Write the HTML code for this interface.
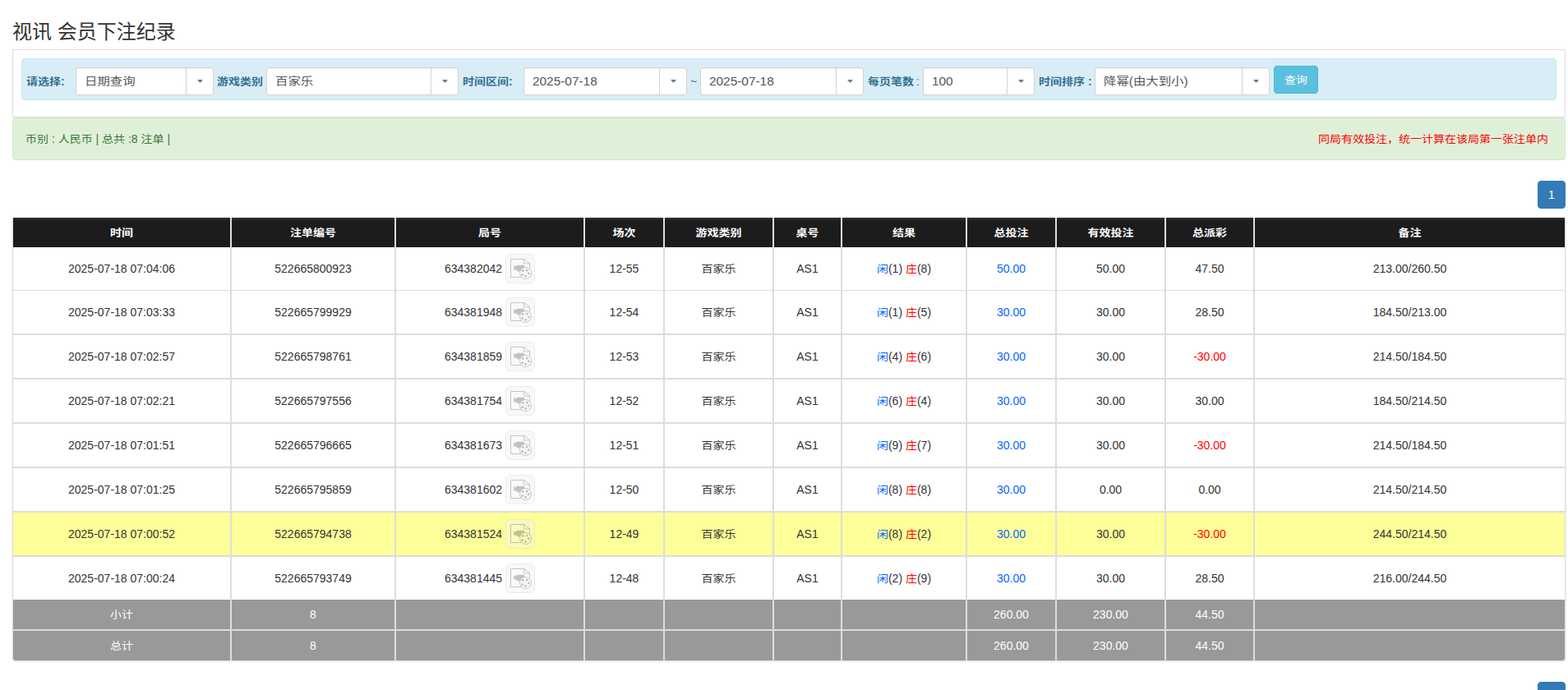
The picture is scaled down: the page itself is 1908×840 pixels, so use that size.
<!DOCTYPE html>
<html lang="zh-CN">
<head>
<meta charset="utf-8">
<title>视讯 会员下注纪录</title>
<style>
*{box-sizing:border-box}
html,body{margin:0;padding:0}
body{width:1908px;height:840px;overflow:hidden;position:relative;background:#fff;color:#333;
 font-family:"Liberation Sans","Noto Sans CJK SC",sans-serif;font-size:14px;line-height:20px}
.title{position:absolute;left:15px;top:25px;margin:0;font-size:24px;line-height:28px;font-weight:400;color:#333;white-space:nowrap}
.panel{position:absolute;left:15px;top:60px;width:1890px;height:83px;border:1px solid #ddd;background:#fff}
.filter{position:absolute;left:26px;top:71px;width:1868px;height:51px;background:#d9edf7;border:1px solid #bce8f1;border-radius:4px}
.lb{position:absolute;top:89px;height:20px;line-height:20px;font-weight:700;color:#31708f;white-space:nowrap;font-size:14px}
.dd{position:absolute;top:82px;height:34px;background:#fff;border:1px solid #d2d2d2;border-radius:3px;box-shadow:inset 0 1px 1px rgba(0,0,0,.05);overflow:hidden}
.dv{position:absolute;left:10px;top:0;line-height:32px;font-size:15.4px;color:#555;white-space:nowrap}
.da{position:absolute;right:0;top:0;width:33px;height:32px;border-left:1px solid #d2d2d2}
.da i{position:absolute;left:13px;top:14px;width:7px;height:4px;background:#7a7a7a;clip-path:polygon(0 0,100% 0,50% 100%)}
.btn{position:absolute;left:1550px;top:80px;width:54px;height:34px;background:#5bc0de;border:1px solid #46b8da;border-radius:4px;color:#fff;text-align:center;line-height:32px;font-size:14px}
.summary{position:absolute;left:15px;top:143px;width:1890px;height:52px;background:#dff0d8;border:1px solid #d6e9c6;border-radius:4px;color:#3c763d}
.summary .l{position:absolute;left:15px;top:15px;white-space:nowrap}
.summary .r{position:absolute;right:20px;top:15px;color:#f00;white-space:nowrap}
.pg{position:absolute;left:1871px;width:34px;height:34px;background:#337ab7;border:1px solid #337ab7;border-radius:4px;color:#fff;text-align:center;line-height:32px;font-size:14px}
table{position:absolute;left:15px;top:265px;width:1890px;border-collapse:separate;border-spacing:0;table-layout:fixed;font-size:14px}
th,td{padding:0;text-align:center;vertical-align:middle;white-space:nowrap;overflow:hidden}
th{height:36px;background:linear-gradient(#323232 0,#1c1c1c 4px,#1c1c1c 100%);color:#fff;font-weight:700;border-left:1px solid #ddd;border-right:1px solid #ddd}
td{height:54px;border-left:1px solid #ddd;border-right:1px solid #ddd;border-top:1px solid #ddd;border-bottom:1px solid #ddd;color:#333;background:#fff}
tr.r1 td,tr.r2 td{border-top:0;height:53px}
tr.r8 td{border-bottom:0;height:53px}
tr.hl td{background:#ffff99}
td.blue,.pl{color:#06f}
td.neg,.bk{color:#f00}
tfoot td{background:#999;color:#fff;height:37px;border-color:#ddd;border-top:0;border-bottom:1px solid #ddd}
tfoot tr.f1 td{border-bottom:1px solid #ddd;height:37px}
tfoot tr.f2 td{border-top:1px solid #ddd;border-bottom:0;height:37px}
tfoot tr.f2 td:first-child{border-bottom-left-radius:4px}
tfoot tr.f2 td:last-child{border-bottom-right-radius:4px}
.shadow{position:absolute;left:15px;top:265px;width:1890px;height:539px;border-radius:0 0 4px 4px;box-shadow:0 1px 2px rgba(0,0,0,.18);pointer-events:none}
.c{display:inline-block;transform:translateY(1px) scaleY(.885);transform-origin:50% 50%}
.c.d{transform:translateY(-1px) scaleY(.82);transform-origin:50% 72%}
.c.b{transform:translateY(1px) scaleY(.87)}
.c.h{transform:translateY(1px) scaleY(.86)}
.gn{display:inline-block;vertical-align:middle}
.vb{display:inline-block;vertical-align:middle;width:36px;height:36px;margin-left:4px;border:1px solid #d6d6d6;border-radius:6px;background:#f0f0f0;opacity:.45;position:relative}
.vb svg{position:absolute;left:5px;top:5px;display:block}
</style>
</head>
<body>
<h3 class="title">视讯 会员下注纪录</h3>
<div class="panel"></div>
<div class="filter"></div>
<span class="lb" style="left:32px"><span class="c b">请选择</span>:</span>
<span class="dd" style="left:92px;width:168px"><span class="dv"><span class="c d">日期查询</span></span><span class="da"><i></i></span></span>
<span class="lb" style="left:264px"><span class="c b">游戏类别</span></span>
<span class="dd" style="left:324px;width:234px"><span class="dv"><span class="c d">百家乐</span></span><span class="da"><i></i></span></span>
<span class="lb" style="left:563px"><span class="c b">时间区间</span>:</span>
<span class="dd" style="left:637px;width:199px"><span class="dv">2025-07-18</span><span class="da"><i></i></span></span>
<span class="lb" style="left:840px;font-weight:400">~</span>
<span class="dd" style="left:852px;width:199px"><span class="dv">2025-07-18</span><span class="da"><i></i></span></span>
<span class="lb" style="left:1056px"><span class="c b">每页笔数</span> <b style="font-weight:400;margin-left:-1px">:</b></span>
<span class="dd" style="left:1123px;width:136px"><span class="dv">100</span><span class="da"><i></i></span></span>
<span class="lb" style="left:1264px"><span class="c b">时间排序</span> :</span>
<span class="dd" style="left:1332px;width:213px"><span class="dv"><span class="c d">降幂</span>(<span class="c d">由大到小</span>)</span><span class="da"><i></i></span></span>
<span class="btn"><span class="c">查询</span></span>
<div class="summary"><span class="l"><span class="c">币别</span> : <span class="c">人民币</span> | <span class="c">总共</span> :8 <span class="c">注单</span> |</span><span class="r"><span class="c">同局有效投注，统一计算在该局第一张注单内</span></span></div>
<span class="pg" style="top:220px">1</span>
<table>
<colgroup><col style="width:266px"><col style="width:200px"><col style="width:230px"><col style="width:97px"><col style="width:133px"><col style="width:83px"><col style="width:152px"><col style="width:109px"><col style="width:133px"><col style="width:108px"><col style="width:379px"></colgroup>
<thead><tr><th><span class="c h">时间</span></th><th><span class="c h">注单编号</span></th><th><span class="c h">局号</span></th><th><span class="c h">场次</span></th><th><span class="c h">游戏类别</span></th><th><span class="c h">桌号</span></th><th><span class="c h">结果</span></th><th><span class="c h">总投注</span></th><th><span class="c h">有效投注</span></th><th><span class="c h">总派彩</span></th><th><span class="c h">备注</span></th></tr></thead>
<tbody>
<tr class="r1"><td>2025-07-18 07:04:06</td><td>522665800923</td><td class="g"><span class="gn">634382042</span><span class="vb"><svg class="ic" viewBox="0 0 26 25" width="26" height="25"><path d="M0.5 0.5H16.5L23.5 6V22.5H0.5Z" fill="rgba(255,255,255,.4)" stroke="#808080" stroke-width="1"/><path d="M16.5 0.5V6H23.5Z" fill="#fff" stroke="#808080" stroke-width="1" stroke-linejoin="round"/><path d="M4.2 8.3L6.8 9.8V8.6H7.8V7.8H17.2V14.8H13V15.4H9V14.8H7.8V14H6.8V12.8L4.2 14.3Z" fill="#7a7a7a"/><circle cx="18.5" cy="17.5" r="7" fill="#f6f6f6" stroke="#808080" stroke-width="1"/><circle cx="15.3" cy="14.6" r="1.5" fill="#7a7a7a"/><circle cx="20.2" cy="14" r="1.5" fill="#7a7a7a"/><circle cx="22.2" cy="17.7" r="1.5" fill="#7a7a7a"/><circle cx="18.6" cy="21.2" r="1.5" fill="#7a7a7a"/><circle cx="14.7" cy="19.4" r="1.5" fill="#7a7a7a"/><circle cx="18.5" cy="17.5" r="0.5" fill="#7a7a7a"/></svg></span></td><td>12-55</td><td><span class="c">百家乐</span></td><td>AS1</td><td><span class="c pl">闲</span>(1) <span class="c bk">庄</span>(8)</td><td class="blue">50.00</td><td>50.00</td><td>47.50</td><td>213.00/260.50</td></tr>
<tr class="r2"><td>2025-07-18 07:03:33</td><td>522665799929</td><td class="g"><span class="gn">634381948</span><span class="vb"><svg class="ic" viewBox="0 0 26 25" width="26" height="25"><path d="M0.5 0.5H16.5L23.5 6V22.5H0.5Z" fill="rgba(255,255,255,.4)" stroke="#808080" stroke-width="1"/><path d="M16.5 0.5V6H23.5Z" fill="#fff" stroke="#808080" stroke-width="1" stroke-linejoin="round"/><path d="M4.2 8.3L6.8 9.8V8.6H7.8V7.8H17.2V14.8H13V15.4H9V14.8H7.8V14H6.8V12.8L4.2 14.3Z" fill="#7a7a7a"/><circle cx="18.5" cy="17.5" r="7" fill="#f6f6f6" stroke="#808080" stroke-width="1"/><circle cx="15.3" cy="14.6" r="1.5" fill="#7a7a7a"/><circle cx="20.2" cy="14" r="1.5" fill="#7a7a7a"/><circle cx="22.2" cy="17.7" r="1.5" fill="#7a7a7a"/><circle cx="18.6" cy="21.2" r="1.5" fill="#7a7a7a"/><circle cx="14.7" cy="19.4" r="1.5" fill="#7a7a7a"/><circle cx="18.5" cy="17.5" r="0.5" fill="#7a7a7a"/></svg></span></td><td>12-54</td><td><span class="c">百家乐</span></td><td>AS1</td><td><span class="c pl">闲</span>(1) <span class="c bk">庄</span>(5)</td><td class="blue">30.00</td><td>30.00</td><td>28.50</td><td>184.50/213.00</td></tr>
<tr class="r3"><td>2025-07-18 07:02:57</td><td>522665798761</td><td class="g"><span class="gn">634381859</span><span class="vb"><svg class="ic" viewBox="0 0 26 25" width="26" height="25"><path d="M0.5 0.5H16.5L23.5 6V22.5H0.5Z" fill="rgba(255,255,255,.4)" stroke="#808080" stroke-width="1"/><path d="M16.5 0.5V6H23.5Z" fill="#fff" stroke="#808080" stroke-width="1" stroke-linejoin="round"/><path d="M4.2 8.3L6.8 9.8V8.6H7.8V7.8H17.2V14.8H13V15.4H9V14.8H7.8V14H6.8V12.8L4.2 14.3Z" fill="#7a7a7a"/><circle cx="18.5" cy="17.5" r="7" fill="#f6f6f6" stroke="#808080" stroke-width="1"/><circle cx="15.3" cy="14.6" r="1.5" fill="#7a7a7a"/><circle cx="20.2" cy="14" r="1.5" fill="#7a7a7a"/><circle cx="22.2" cy="17.7" r="1.5" fill="#7a7a7a"/><circle cx="18.6" cy="21.2" r="1.5" fill="#7a7a7a"/><circle cx="14.7" cy="19.4" r="1.5" fill="#7a7a7a"/><circle cx="18.5" cy="17.5" r="0.5" fill="#7a7a7a"/></svg></span></td><td>12-53</td><td><span class="c">百家乐</span></td><td>AS1</td><td><span class="c pl">闲</span>(4) <span class="c bk">庄</span>(6)</td><td class="blue">30.00</td><td>30.00</td><td class="neg">-30.00</td><td>214.50/184.50</td></tr>
<tr class="r4"><td>2025-07-18 07:02:21</td><td>522665797556</td><td class="g"><span class="gn">634381754</span><span class="vb"><svg class="ic" viewBox="0 0 26 25" width="26" height="25"><path d="M0.5 0.5H16.5L23.5 6V22.5H0.5Z" fill="rgba(255,255,255,.4)" stroke="#808080" stroke-width="1"/><path d="M16.5 0.5V6H23.5Z" fill="#fff" stroke="#808080" stroke-width="1" stroke-linejoin="round"/><path d="M4.2 8.3L6.8 9.8V8.6H7.8V7.8H17.2V14.8H13V15.4H9V14.8H7.8V14H6.8V12.8L4.2 14.3Z" fill="#7a7a7a"/><circle cx="18.5" cy="17.5" r="7" fill="#f6f6f6" stroke="#808080" stroke-width="1"/><circle cx="15.3" cy="14.6" r="1.5" fill="#7a7a7a"/><circle cx="20.2" cy="14" r="1.5" fill="#7a7a7a"/><circle cx="22.2" cy="17.7" r="1.5" fill="#7a7a7a"/><circle cx="18.6" cy="21.2" r="1.5" fill="#7a7a7a"/><circle cx="14.7" cy="19.4" r="1.5" fill="#7a7a7a"/><circle cx="18.5" cy="17.5" r="0.5" fill="#7a7a7a"/></svg></span></td><td>12-52</td><td><span class="c">百家乐</span></td><td>AS1</td><td><span class="c pl">闲</span>(6) <span class="c bk">庄</span>(4)</td><td class="blue">30.00</td><td>30.00</td><td>30.00</td><td>184.50/214.50</td></tr>
<tr class="r5"><td>2025-07-18 07:01:51</td><td>522665796665</td><td class="g"><span class="gn">634381673</span><span class="vb"><svg class="ic" viewBox="0 0 26 25" width="26" height="25"><path d="M0.5 0.5H16.5L23.5 6V22.5H0.5Z" fill="rgba(255,255,255,.4)" stroke="#808080" stroke-width="1"/><path d="M16.5 0.5V6H23.5Z" fill="#fff" stroke="#808080" stroke-width="1" stroke-linejoin="round"/><path d="M4.2 8.3L6.8 9.8V8.6H7.8V7.8H17.2V14.8H13V15.4H9V14.8H7.8V14H6.8V12.8L4.2 14.3Z" fill="#7a7a7a"/><circle cx="18.5" cy="17.5" r="7" fill="#f6f6f6" stroke="#808080" stroke-width="1"/><circle cx="15.3" cy="14.6" r="1.5" fill="#7a7a7a"/><circle cx="20.2" cy="14" r="1.5" fill="#7a7a7a"/><circle cx="22.2" cy="17.7" r="1.5" fill="#7a7a7a"/><circle cx="18.6" cy="21.2" r="1.5" fill="#7a7a7a"/><circle cx="14.7" cy="19.4" r="1.5" fill="#7a7a7a"/><circle cx="18.5" cy="17.5" r="0.5" fill="#7a7a7a"/></svg></span></td><td>12-51</td><td><span class="c">百家乐</span></td><td>AS1</td><td><span class="c pl">闲</span>(9) <span class="c bk">庄</span>(7)</td><td class="blue">30.00</td><td>30.00</td><td class="neg">-30.00</td><td>214.50/184.50</td></tr>
<tr class="r6"><td>2025-07-18 07:01:25</td><td>522665795859</td><td class="g"><span class="gn">634381602</span><span class="vb"><svg class="ic" viewBox="0 0 26 25" width="26" height="25"><path d="M0.5 0.5H16.5L23.5 6V22.5H0.5Z" fill="rgba(255,255,255,.4)" stroke="#808080" stroke-width="1"/><path d="M16.5 0.5V6H23.5Z" fill="#fff" stroke="#808080" stroke-width="1" stroke-linejoin="round"/><path d="M4.2 8.3L6.8 9.8V8.6H7.8V7.8H17.2V14.8H13V15.4H9V14.8H7.8V14H6.8V12.8L4.2 14.3Z" fill="#7a7a7a"/><circle cx="18.5" cy="17.5" r="7" fill="#f6f6f6" stroke="#808080" stroke-width="1"/><circle cx="15.3" cy="14.6" r="1.5" fill="#7a7a7a"/><circle cx="20.2" cy="14" r="1.5" fill="#7a7a7a"/><circle cx="22.2" cy="17.7" r="1.5" fill="#7a7a7a"/><circle cx="18.6" cy="21.2" r="1.5" fill="#7a7a7a"/><circle cx="14.7" cy="19.4" r="1.5" fill="#7a7a7a"/><circle cx="18.5" cy="17.5" r="0.5" fill="#7a7a7a"/></svg></span></td><td>12-50</td><td><span class="c">百家乐</span></td><td>AS1</td><td><span class="c pl">闲</span>(8) <span class="c bk">庄</span>(8)</td><td class="blue">30.00</td><td>0.00</td><td>0.00</td><td>214.50/214.50</td></tr>
<tr class="r7 hl"><td>2025-07-18 07:00:52</td><td>522665794738</td><td class="g"><span class="gn">634381524</span><span class="vb"><svg class="ic" viewBox="0 0 26 25" width="26" height="25"><path d="M0.5 0.5H16.5L23.5 6V22.5H0.5Z" fill="rgba(255,255,255,.4)" stroke="#808080" stroke-width="1"/><path d="M16.5 0.5V6H23.5Z" fill="#fff" stroke="#808080" stroke-width="1" stroke-linejoin="round"/><path d="M4.2 8.3L6.8 9.8V8.6H7.8V7.8H17.2V14.8H13V15.4H9V14.8H7.8V14H6.8V12.8L4.2 14.3Z" fill="#7a7a7a"/><circle cx="18.5" cy="17.5" r="7" fill="#f6f6f6" stroke="#808080" stroke-width="1"/><circle cx="15.3" cy="14.6" r="1.5" fill="#7a7a7a"/><circle cx="20.2" cy="14" r="1.5" fill="#7a7a7a"/><circle cx="22.2" cy="17.7" r="1.5" fill="#7a7a7a"/><circle cx="18.6" cy="21.2" r="1.5" fill="#7a7a7a"/><circle cx="14.7" cy="19.4" r="1.5" fill="#7a7a7a"/><circle cx="18.5" cy="17.5" r="0.5" fill="#7a7a7a"/></svg></span></td><td>12-49</td><td><span class="c">百家乐</span></td><td>AS1</td><td><span class="c pl">闲</span>(8) <span class="c bk">庄</span>(2)</td><td class="blue">30.00</td><td>30.00</td><td class="neg">-30.00</td><td>244.50/214.50</td></tr>
<tr class="r8"><td>2025-07-18 07:00:24</td><td>522665793749</td><td class="g"><span class="gn">634381445</span><span class="vb"><svg class="ic" viewBox="0 0 26 25" width="26" height="25"><path d="M0.5 0.5H16.5L23.5 6V22.5H0.5Z" fill="rgba(255,255,255,.4)" stroke="#808080" stroke-width="1"/><path d="M16.5 0.5V6H23.5Z" fill="#fff" stroke="#808080" stroke-width="1" stroke-linejoin="round"/><path d="M4.2 8.3L6.8 9.8V8.6H7.8V7.8H17.2V14.8H13V15.4H9V14.8H7.8V14H6.8V12.8L4.2 14.3Z" fill="#7a7a7a"/><circle cx="18.5" cy="17.5" r="7" fill="#f6f6f6" stroke="#808080" stroke-width="1"/><circle cx="15.3" cy="14.6" r="1.5" fill="#7a7a7a"/><circle cx="20.2" cy="14" r="1.5" fill="#7a7a7a"/><circle cx="22.2" cy="17.7" r="1.5" fill="#7a7a7a"/><circle cx="18.6" cy="21.2" r="1.5" fill="#7a7a7a"/><circle cx="14.7" cy="19.4" r="1.5" fill="#7a7a7a"/><circle cx="18.5" cy="17.5" r="0.5" fill="#7a7a7a"/></svg></span></td><td>12-48</td><td><span class="c">百家乐</span></td><td>AS1</td><td><span class="c pl">闲</span>(2) <span class="c bk">庄</span>(9)</td><td class="blue">30.00</td><td>30.00</td><td>28.50</td><td>216.00/244.50</td></tr>
</tbody>
<tfoot>
<tr class="f1"><td><span class="c">小计</span></td><td>8</td><td></td><td></td><td></td><td></td><td></td><td>260.00</td><td>230.00</td><td>44.50</td><td></td></tr>
<tr class="f2"><td><span class="c">总计</span></td><td>8</td><td></td><td></td><td></td><td></td><td></td><td>260.00</td><td>230.00</td><td>44.50</td><td></td></tr>
</tfoot>
</table>
<div class="shadow"></div>
<span class="pg" style="top:830px">1</span>
</body>
</html>
